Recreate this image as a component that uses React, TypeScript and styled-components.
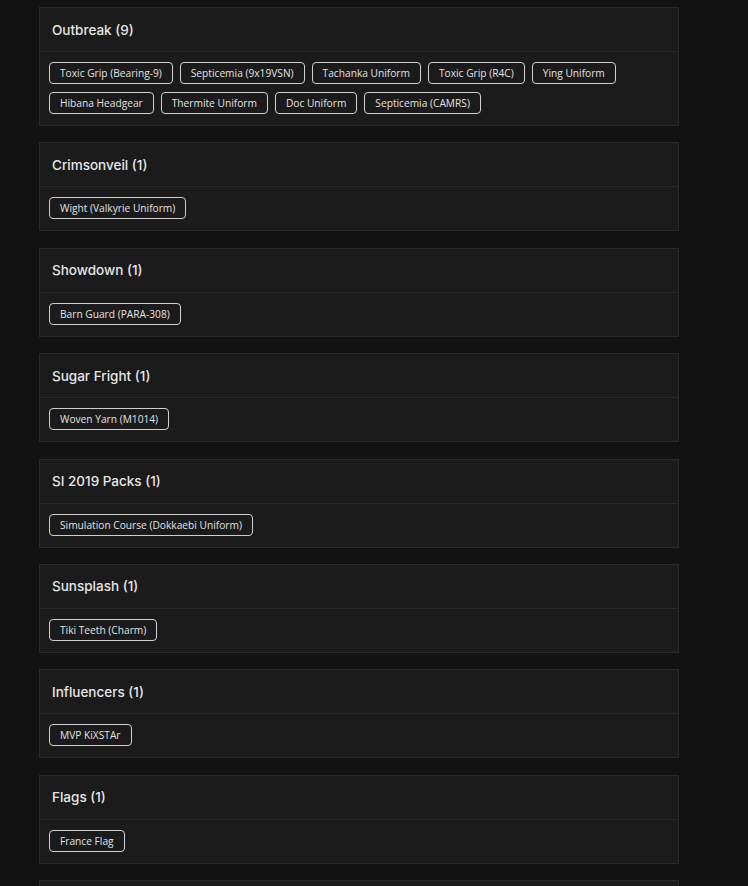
import React from 'react';
import styled, {createGlobalStyle} from "styled-components";

const GlobalStyle = createGlobalStyle`
  html, body {
    margin: 0;
    padding: 0;
    background: #121212;
  }
  body {
    font-family: "Open Sans", "Noto Sans", sans-serif;
  }
`;

interface Bundle {
    name: string;
    items: string[];
}

const bundles: Bundle[] = [
    {
        name: "Outbreak",
        items: [
            "Toxic Grip (Bearing-9)",
            "Septicemia (9x19VSN)",
            "Tachanka Uniform",
            "Toxic Grip (R4C)",
            "Ying Uniform",
            "Hibana Headgear",
            "Thermite Uniform",
            "Doc Uniform",
            "Septicemia (CAMRS)",
        ],
    },
    {name: "Crimsonveil", items: ["Wight (Valkyrie Uniform)"]},
    {name: "Showdown", items: ["Barn Guard (PARA-308)"]},
    {name: "Sugar Fright", items: ["Woven Yarn (M1014)"]},
    {name: "SI 2019 Packs", items: ["Simulation Course (Dokkaebi Uniform)"]},
    {name: "Sunsplash", items: ["Tiki Teeth (Charm)"]},
    {name: "Influencers", items: ["MVP KiXSTAr"]},
    {name: "Flags", items: ["France Flag"]},
    {name: "Charms", items: ["Esports Charm"]},
];

const Page = styled.main`
  padding: 7px 0 0 39px;
  height: 886px;
  box-sizing: border-box;
  overflow: hidden;
  display: flex;
  flex-direction: column;
  gap: 16.4px;
`;

const Card = styled.section`
  width: 640px;
  box-sizing: border-box;
  background: #1b1b1b;
  border: 1px solid #2a2a2a;
  flex-shrink: 0;
`;

const Header = styled.header`
  height: 43px;
  display: flex;
  align-items: center;
  padding: 0 12px;
  border-bottom: 1px solid #2a2a2a;
`;

const Title = styled.h3`
  margin: 0;
  font-family: Inter, "Open Sans", sans-serif;
  font-size: 13.5px;
  font-weight: 500;
  color: #e6e6e6;
`;

const Tags = styled.div`
  display: flex;
  flex-wrap: wrap;
  gap: 8px 7px;
  padding: 10px 9px 11px;
`;

const Tag = styled.span`
  display: inline-flex;
  align-items: center;
  height: 22px;
  padding: 0 10px;
  box-sizing: border-box;
  border: 1px solid #cfcfcf;
  border-radius: 4px;
  font-size: 10.2px;
  color: #e2e2e2;
  white-space: nowrap;
`;

export default function App() {
    return <>
        <GlobalStyle/>
        <Page>
            {bundles.map(b => (
                <Card key={b.name}>
                    <Header>
                        <Title>{b.name} ({b.items.length})</Title>
                    </Header>
                    <Tags>
                        {b.items.map(item => <Tag key={item}>{item}</Tag>)}
                    </Tags>
                </Card>
            ))}
        </Page>
    </>;
}
